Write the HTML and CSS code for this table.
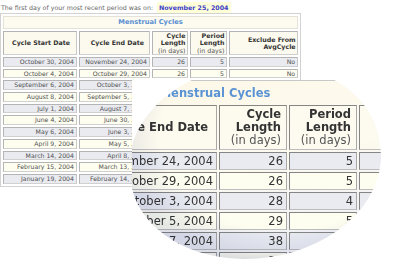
FILE: index.html
```html
<!DOCTYPE html>
<html>
<head>
<meta charset="utf-8">
<title>Menstrual Cycles</title>
<link rel="stylesheet" href="styles.css">
</head>
<body>
<div class="page">
  <p class="intro">The first day of your most recent period was on: <span class="last-date">November 25, 2004</span></p>
  <table class="cycles">
    <colgroup><col class="w1"><col class="w2"><col class="w3"><col class="w4"><col class="w5"></colgroup>
    <thead>
      <tr><th colspan="5" class="title">Menstrual Cycles</th></tr>
      <tr class="head">
        <th class="h-date1">Cycle Start Date</th>
        <th class="h-date2">Cycle End Date</th>
        <th>Cycle<br>Length<br><span class="unit">(in days)</span></th>
        <th>Period<br>Length<br><span class="unit">(in days)</span></th>
        <th>Exclude From<br>AvgCycle</th>
      </tr>
    </thead>
    <tbody>
      <tr><td>October 30, 2004</td><td>November 24, 2004</td><td>26</td><td>5</td><td>No</td></tr>
      <tr><td>October 4, 2004</td><td>October 29, 2004</td><td>26</td><td>5</td><td>No</td></tr>
      <tr><td>September 6, 2004</td><td>October 3, 2004</td><td>28</td><td>4</td><td>No</td></tr>
      <tr><td>August 8, 2004</td><td>September 5, 2004</td><td>29</td><td>5</td><td>No</td></tr>
      <tr><td>July 1, 2004</td><td>August 7, 2004</td><td>38</td><td>5</td><td>No</td></tr>
      <tr><td>June 4, 2004</td><td>June 30, 2004</td><td>27</td><td>5</td><td>No</td></tr>
      <tr><td>May 6, 2004</td><td>June 3, 2004</td><td>29</td><td>5</td><td>No</td></tr>
      <tr><td>April 9, 2004</td><td>May 5, 2004</td><td>27</td><td>5</td><td>No</td></tr>
      <tr><td>March 14, 2004</td><td>April 8, 2004</td><td>26</td><td>5</td><td>No</td></tr>
      <tr><td>February 15, 2004</td><td>March 13, 2004</td><td>28</td><td>5</td><td>No</td></tr>
      <tr><td>January 19, 2004</td><td>February 14, 2004</td><td>27</td><td>5</td><td>No</td></tr>
    </tbody>
  </table>

  <div class="magnifier">
    <div class="lens">
      <table class="cycles big">
        <colgroup><col class="w1"><col class="w2"><col class="w3"><col class="w4"><col class="w5"></colgroup>
        <thead>
          <tr><th colspan="5" class="title">Menstrual Cycles</th></tr>
          <tr class="head">
            <th class="h-date1">Cycle Start Date</th>
            <th class="h-date2">Cycle End Date</th>
            <th>Cycle<br>Length<br><span class="unit">(in days)</span></th>
            <th>Period<br>Length<br><span class="unit">(in days)</span></th>
            <th>Exclude From<br>AvgCycle</th>
          </tr>
        </thead>
        <tbody>
          <tr><td>October 30, 2004</td><td>November 24, 2004</td><td>26</td><td>5</td><td>No</td></tr>
          <tr><td>October 4, 2004</td><td>October 29, 2004</td><td>26</td><td>5</td><td>No</td></tr>
          <tr><td>September 6, 2004</td><td>October 3, 2004</td><td>28</td><td>4</td><td>No</td></tr>
          <tr><td>August 8, 2004</td><td>September 5, 2004</td><td>29</td><td>5</td><td>No</td></tr>
          <tr><td>July 1, 2004</td><td>August 7, 2004</td><td>38</td><td>5</td><td>No</td></tr>
          <tr><td>June 4, 2004</td><td>June 30, 2004</td><td>27</td><td>5</td><td>No</td></tr>
        </tbody>
      </table>
    </div>
  </div>
</div>
</body>
</html>
```
FILE: styles.css
```css
* { box-sizing: border-box; }
html, body { margin: 0; padding: 0; background: #fff; }
body { font-family: "DejaVu Sans", Verdana, sans-serif; }

.page {
  position: relative;
  width: 398px;
  height: 264px;
  overflow: hidden;
  padding: 2px 0 0 0;
}

.intro {
  margin: 0 0 0 1px;
  font-size: 6.3px;
  line-height: 11px;
  color: #666;
  white-space: nowrap;
}
.last-date {
  font-weight: bold;
  color: #3d3dc8;
  background: #ffffd8;
  padding: 2px 2px;
  margin-left: 2px;
}

/* small table */
.cycles {
  border-collapse: separate;
  border-spacing: 2px;
  table-layout: fixed;
  width: 301px;
  border: 1px solid #d2d2d2;
  color: #505050;
  font-size: 6.2px;
  margin: 0;
}
.cycles .w1 { width: 74px; }
.cycles .w2 { width: 71px; }
.cycles .w3 { width: 36px; }
.cycles .w4 { width: 37px; }
.cycles .w5 { width: 69px; }

.cycles th, .cycles td {
  border: 1px solid;
  border-color: #b4b4b4 #c8c8c8 #d0d0d0 #b4b4b4;
  white-space: nowrap;
  overflow: hidden;
  text-align: right;
}
.cycles .title {
  text-align: center;
  background: #fdfbef;
  color: #5a8fd2;
  font-size: 6.7px;
  line-height: 9px;
  border-color: #e4e2d8;
}
.cycles .head th {
  background: #fcfaef;
  color: #333;
  font-weight: bold;
  font-size: 6.3px;
  line-height: 7.3px;
  padding: 0 1.5px 0 0;
}
.cycles .head .h-date1 { padding-right: 6px; }
.cycles .head .h-date2 { padding-right: 5px; }
.cycles .unit { font-weight: normal; color: #555; }

.cycles td {
  line-height: 7.7px;
  padding: 0 2px 0 0;
}
.cycles tbody tr:nth-child(odd) td { background: #e9ebf1; }
.cycles tbody tr:nth-child(even) td { background: #fefef0; }

/* magnifier overlay: white picture laid over the table, holding the lens */
.magnifier {
  position: absolute;
  left: 132px;
  top: 80px;
  right: 0;
  bottom: 0;
  background: #fff;
}
.lens {
  position: absolute;
  inset: 0;
  overflow: hidden;
  clip-path: path('M 247.7 63.5 A 126 94 -8 1 1 -1.7 98.5 A 126 94 -8 1 1 247.7 63.5 Z');
  background: linear-gradient(165deg, #fdf8e7 0%, #fdfaf0 45%, #eef0f6 88%);
}
.lens::after {
  content: "";
  position: absolute;
  inset: 0;
  background:
    radial-gradient(ellipse 165px 128px at 150px 55px, #fff 74%, #e6e8f2 100%),
    linear-gradient(to top, #e9ebf4 0px, #fff 12px);
  background-blend-mode: multiply;
  mix-blend-mode: multiply;
  pointer-events: none;
}

.cycles.big {
  width: 554px;
  border-spacing: 2px;
  border: 1px solid #c8c8c8;
  font-size: 11.5px;
  color: #333;
  margin: 0 0 0 -194px;
}
.cycles.big .w1 { width: 139px; }
.cycles.big .w2 { width: 135px; }
.cycles.big .w3 { width: 68px; }
.cycles.big .w4 { width: 68px; }
.cycles.big .w5 { width: 130px; }
.cycles.big th, .cycles.big td {
  border-color: #858585 #a8a8a8 #bdbdbd #858585;
}
.cycles.big .title {
  font-size: 11.5px;
  line-height: 16px;
  background: transparent;
  border-color: transparent;
  color: #5a93d4;
}
.cycles.big .head th {
  font-size: 11.5px;
  line-height: 13px;
  padding: 2px 5px 2px 0;
  background: rgba(252,250,239,0.8);
}
.cycles.big .head .h-date1 { padding-right: 10px; }
.cycles.big .head .h-date2 { padding-right: 8px; }
.cycles.big td {
  font-size: 11.5px;
  line-height: 15px;
  padding: 1px 3px 0 0;
}
```
